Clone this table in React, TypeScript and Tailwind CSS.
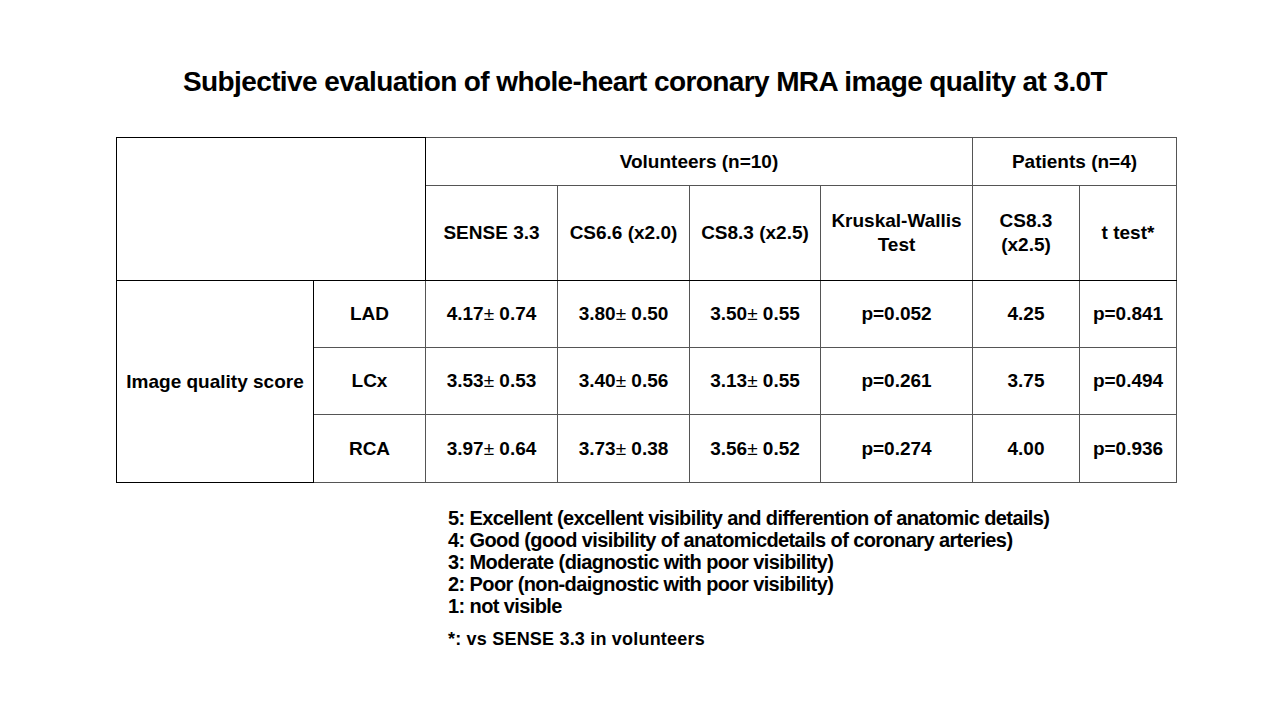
import React from 'react';

const rows = [
  { name: 'LAD', v: ['4.17', '0.74', '3.80', '0.50', '3.50', '0.55'], kw: 'p=0.052', cs: '4.25', t: 'p=0.841', h: 'h-[67px]' },
  { name: 'LCx', v: ['3.53', '0.53', '3.40', '0.56', '3.13', '0.55'], kw: 'p=0.261', cs: '3.75', t: 'p=0.494', h: 'h-[67px]' },
  { name: 'RCA', v: ['3.97', '0.64', '3.73', '0.38', '3.56', '0.52'], kw: 'p=0.274', cs: '4.00', t: 'p=0.936', h: 'h-[68px]' },
];

const legend = [
  '5: Excellent (excellent visibility and differention of anatomic details)',
  '4: Good (good visibility of anatomicdetails of coronary arteries)',
  '3: Moderate (diagnostic with poor visibility)',
  '2: Poor (non-daignostic with poor visibility)',
  '1: not visible',
];

// 平均値 ± SD、±記号だけ細字
function MeanSd({ m, sd }: { m: string; sd: string }) {
  return (
    <span>
      {m}
      <span className="font-normal">±</span> {sd}
    </span>
  );
}

const cell = 'border border-[#555] text-center align-middle p-0';

export default function App() {
  return (
    <div className="w-[1280px] h-[720px] bg-white text-black font-['Liberation_Sans',Arial,sans-serif] font-bold">
      <h1 className="pt-[66px] text-center text-[28px] leading-[32px] tracking-[-0.6px] font-bold pl-[10px]">
        Subjective evaluation of whole-heart coronary MRA image quality at 3.0T
      </h1>

      <table className="ml-[116px] mt-[39px] w-[1060px] table-fixed border-collapse border border-black text-[19px] leading-[24px]">
        <colgroup>
          <col className="w-[197px]" />
          <col className="w-[112px]" />
          <col className="w-[132px]" />
          <col className="w-[132px]" />
          <col className="w-[131px]" />
          <col className="w-[152px]" />
          <col className="w-[107px]" />
          <col className="w-[97px]" />
        </colgroup>
        <tbody>
          <tr className="h-[48px]">
            <td colSpan={2} rowSpan={2} className="border border-black border-b-black" />
            <td colSpan={4} className={cell}>Volunteers (n=10)</td>
            <td colSpan={2} className={cell}>Patients (n=4)</td>
          </tr>
          <tr className="h-[95px]">
            <td className={`${cell} border-b-black`}>SENSE 3.3</td>
            <td className={`${cell} border-b-black`}>CS6.6 (x2.0)</td>
            <td className={`${cell} border-b-black`}>CS8.3 (x2.5)</td>
            <td className={`${cell} border-b-black`}>
              Kruskal-Wallis
              <br />
              Test
            </td>
            <td className={`${cell} border-b-black`}>
              CS8.3
              <br />
              (x2.5)
            </td>
            <td className={`${cell} border-b-black`}>t test*</td>
          </tr>
          {rows.map((r, i) => (
            <tr key={r.name} className={r.h}>
              {i === 0 && (
                <td rowSpan={3} className="border border-black text-center align-middle">
                  Image quality score
                </td>
              )}
              <td className="border border-black border-r-[#555] border-b-[#555] text-center">{r.name}</td>
              <td className={cell}>
                <MeanSd m={r.v[0]} sd={r.v[1]} />
              </td>
              <td className={cell}>
                <MeanSd m={r.v[2]} sd={r.v[3]} />
              </td>
              <td className={cell}>
                <MeanSd m={r.v[4]} sd={r.v[5]} />
              </td>
              <td className={cell}>{r.kw}</td>
              <td className={cell}>{r.cs}</td>
              <td className={cell}>{r.t}</td>
            </tr>
          ))}
        </tbody>
      </table>

      <div className="ml-[448px] mt-[24px] text-[20px] leading-[22px] tracking-[-0.6px]">
        {legend.map((l) => (
          <div key={l}>{l}</div>
        ))}
        <div className="mt-[11px] text-[18px] leading-[22px] tracking-[0.2px]">*: vs SENSE 3.3 in volunteers</div>
      </div>
    </div>
  );
}
